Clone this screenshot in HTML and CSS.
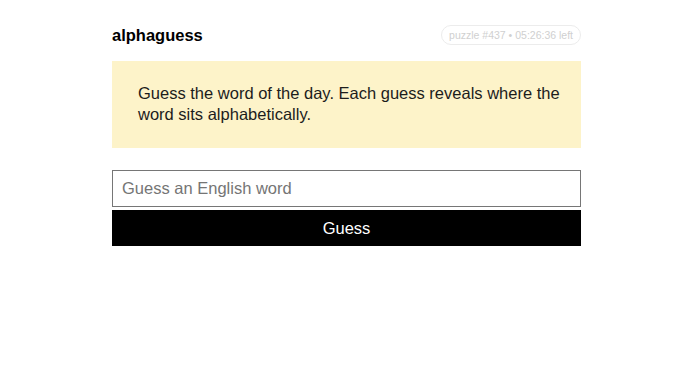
FILE: index.html
```html
<!DOCTYPE html>
<html lang="en">
<head>
  <meta charset="UTF-8">
  <meta name="viewport" content="width=device-width, initial-scale=1.0">
  <title>alphaguess</title>
  <link rel="stylesheet" href="styles.css">
</head>
<body>
  <main class="alphaguess-app">
    <header class="top-bar">
      <h1>alphaguess</h1>
      <span class="puzzle-info">puzzle #437 • 05:26:36 left</span>
    </header>
    <section class="intro">
      <p>Guess the word of the day. Each guess reveals where the word sits alphabetically.</p>
    </section>
    <form class="guess-form" action="">
      <input type="text" name="guess" placeholder="Guess an English word">
      <button type="submit">Guess</button>
    </form>
  </main>
</body>
</html>
```

FILE: styles.css
```css
body {
  margin: 0;
  background: #fff;
  font-family: "Liberation Sans", Arial, sans-serif;
  color: #1a1a1a;
}
.alphaguess-app {
  width: 469px;
  margin: 0 0 0 112px;
  padding-top: 25px;
}
.top-bar {
  display: flex;
  justify-content: space-between;
  align-items: center;
  height: 20px;
}
h1 {
  margin: 0;
  font-size: 16.5px;
  font-weight: bold;
  color: #000;
}
.puzzle-info {
  font-size: 10.5px;
  color: #d0d0d0;
  border: 1px solid #ececec;
  border-radius: 10px;
  padding: 3px 7px;
  line-height: 12px;
}
.intro {
  background: #fdf3c9;
  margin-top: 16px;
  padding: 22px 20px 23px 26px;
}
.intro p {
  margin: 0;
  font-size: 16.5px;
  line-height: 21px;
  color: #1c1c1c;
}
.guess-form {
  margin-top: 22px;
  display: flex;
  flex-direction: column;
  gap: 3px;
}
.guess-form input {
  box-sizing: border-box;
  width: 100%;
  height: 37px;
  border: 1px solid #767676;
  padding: 0 9px;
  font-family: inherit;
  font-size: 16.5px;
  outline: none;
}
.guess-form input::placeholder {
  color: #757575;
}
.guess-form button {
  width: 100%;
  height: 36px;
  border: none;
  background: #000;
  color: #fff;
  font-family: inherit;
  font-size: 16.5px;
  cursor: pointer;
}
```
